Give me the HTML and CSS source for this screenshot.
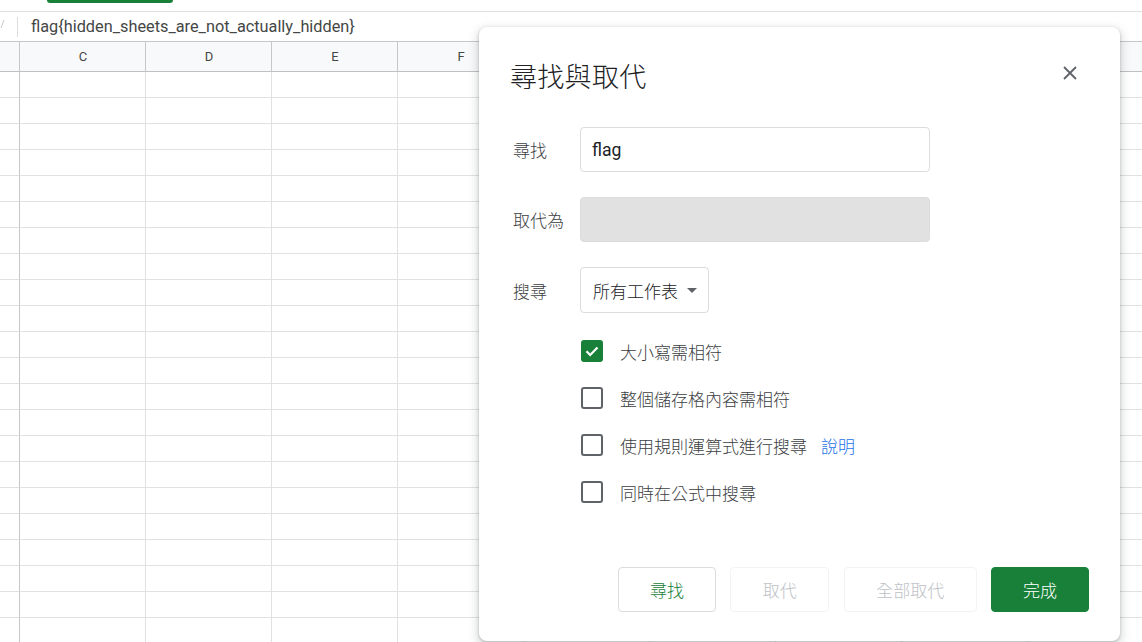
FILE: index.html
```html
<!DOCTYPE html>
<html lang="zh-Hant">
<head>
<meta charset="utf-8">
<title>尋找與取代</title>
<link rel="stylesheet" href="styles.css">
</head>
<body>
<div class="sheet">
  <div class="topbar"><div class="pill"></div></div>
  <div class="formula">
    <span class="fx-stub"></span>
    <span class="sep"></span>
    <span class="ftext">flag{hidden_sheets_are_not_actually_hidden}</span>
  </div>
  <div class="grid">
    <div class="hcell corner"></div>
    <div class="hcell">C</div><div class="hcell">D</div><div class="hcell">E</div><div class="hcell">F</div>
    <div class="hcell"></div><div class="hcell"></div><div class="hcell"></div><div class="hcell"></div><div class="hcell"></div>
  </div>
  <div class="grid rows" id="rows"></div>
</div>

<div class="dialog">
  <div class="dhead">
    <h1 class="title">尋找與取代</h1>
    <button class="close" aria-label="close">
      <svg width="14" height="14" viewBox="0 0 14 14"><path d="M1 1L13 13M13 1L1 13" stroke="#5f6368" stroke-width="1.8" fill="none"/></svg>
    </button>
  </div>
  <div class="form">
    <div class="frow">
      <label class="lbl">尋找</label>
      <div class="input">flag</div>
    </div>
    <div class="frow">
      <label class="lbl">取代為</label>
      <div class="input disabled"></div>
    </div>
    <div class="frow">
      <label class="lbl">搜尋</label>
      <div class="select">所有工作表<span class="caret"></span></div>
    </div>
  </div>
  <div class="checks">
    <div class="crow"><span class="cb checked"><svg width="16" height="16" viewBox="0 0 16 16"><path d="M2.5 8.3L6.2 12L13.5 4.5" stroke="#fff" stroke-width="2.2" fill="none"/></svg></span><span class="clbl">大小寫需相符</span></div>
    <div class="crow"><span class="cb"></span><span class="clbl">整個儲存格內容需相符</span></div>
    <div class="crow"><span class="cb"></span><span class="clbl">使用規則運算式進行搜尋</span><a class="help">說明</a></div>
    <div class="crow"><span class="cb"></span><span class="clbl">同時在公式中搜尋</span></div>
  </div>
  <div class="actions">
    <button class="btn find">尋找</button>
    <button class="btn dis w98">取代</button>
    <button class="btn dis w133">全部取代</button>
    <button class="btn done">完成</button>
  </div>
</div>
<script>
  var r = document.getElementById('rows');
  var h = '';
  for (var i = 0; i < 22; i++) {
    for (var j = 0; j < 10; j++) h += '<div class="cell' + (j === 0 ? ' rh' : '') + '"></div>';
  }
  r.innerHTML = h;
</script>
</body>
</html>
```

FILE: styles.css
```css
* { box-sizing: border-box; }
html, body { margin: 0; padding: 0; }
body {
  width: 1142px; height: 642px; overflow: hidden; position: relative;
  background: #fff;
  font-family: Roboto, "Noto Sans CJK TC", sans-serif;
  color: #202124;
}
.sheet { width: 1142px; }
.topbar { height: 11px; position: relative; }
.pill { margin-left: 47px; width: 126px; height: 3px; background: #188038; border-radius: 0 0 6px 6px; }
.formula {
  height: 31px; border-top: 1px solid #e1e1e1; border-bottom: 1px solid #c7c7c7;
  display: flex; align-items: center;
}
.fx-stub { width: 3px; height: 8px; margin-left: 0; margin-top: -6px; border-right: 1px solid #c9c9c9; transform: skewX(-20deg); }
.sep { width: 1px; height: 20px; background: #dadce0; margin-left: 14px; }
.ftext { margin-left: 13px; font-size: 16.3px; color: #444746; letter-spacing: 0; }
.grid { display: grid; grid-template-columns: 20px repeat(9, 126px); }
.hcell {
  height: 30px; background: #f8f9fa; border-right: 1px solid #c7c7c7; border-bottom: 1px solid #c0c0c0;
  display: flex; align-items: center; justify-content: center; padding-left: 1px;
  font-size: 13px; color: #444746;
}
.cell { height: 26px; border-right: 1px solid #e1e1e1; border-bottom: 1px solid #e1e1e1; }
.cell.rh { border-right-color: #c7c7c7; }

.dialog {
  position: absolute; left: 479px; top: 27px; width: 641px; height: 614px;
  background: #fff; border-radius: 8px;
  box-shadow: 0 4px 8px 3px rgba(60,64,67,.15), 0 1px 3px rgba(60,64,67,.3);
  padding: 0 31px;
  font-family: "Noto Sans CJK TC", Roboto, sans-serif;
}
.dhead { height: 100px; display: flex; align-items: center; justify-content: space-between; }
.title { margin: 0; font-size: 27px; font-weight: 300; color: #202124; letter-spacing: 0.3px; margin-top: -4px; }
.close { border: 0; background: none; padding: 0; width: 24px; height: 24px; display: flex; align-items: center; justify-content: center; margin-right: 7px; margin-top: -8px; }
.form { display: flex; flex-direction: column; gap: 25px; }
.frow { display: flex; align-items: center; }
.lbl { width: 70px; padding-left: 3px; font-size: 17px; font-weight: 300; color: #3c4043; }
.input {
  width: 350px; height: 45px; border: 1px solid #dadce0; border-radius: 4px;
  padding: 0 11px; display: flex; align-items: center;
  font-family: Roboto, sans-serif; font-size: 17.6px; color: #202124;
}
.input.disabled { background: #e1e1e1; border-color: #dadce0; }
.select {
  width: 129px; height: 46px; border: 1px solid #dadce0; border-radius: 4px;
  padding: 0 11px 0 12px; display: flex; align-items: center; justify-content: space-between;
  font-size: 17px; font-weight: 300; color: #202124;
}
.caret { width: 0; height: 0; border-left: 5px solid transparent; border-right: 5px solid transparent; border-top: 5px solid #5f6368; }
.checks { margin-top: 27px; padding-left: 71px; display: flex; flex-direction: column; gap: 25px; }
.crow { display: flex; align-items: center; height: 22px; }
.cb { width: 22px; height: 22px; border: 2px solid #5f6368; border-radius: 3px; flex: none; display: flex; align-items: center; justify-content: center; }
.cb.checked { background: #188038; border-color: #188038; }
.clbl { margin-left: 17px; font-size: 17px; font-weight: 300; color: #3c4043; }
.help { margin-left: 14px; font-size: 17px; color: #1a73e8; font-weight: 300; }
.actions { position: absolute; left: 139px; right: 31px; bottom: 29px; display: flex; justify-content: space-between; }
.btn {
  height: 45px; border-radius: 4px; border: 1px solid #dadce0; background: #fff;
  font-family: "Noto Sans CJK TC", sans-serif; font-size: 17px; font-weight: 300; padding: 0;
}
.find { width: 98px; color: #188038; }
.dis { border-color: #f1f3f4; color: #bdc1c6; }
.w98 { width: 99px; }
.w133 { width: 133px; }
.done { width: 98px; background: #188038; border-color: #188038; color: #fff; }
```
